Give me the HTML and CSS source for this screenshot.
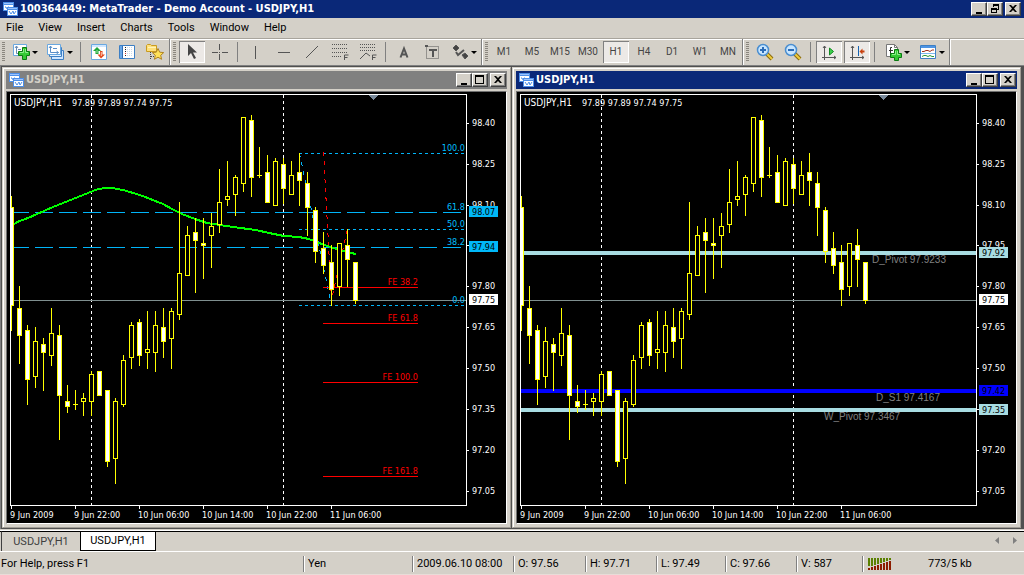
FILE: index.html
```html
<!DOCTYPE html>
<html lang="en">
<head>
<meta charset="utf-8">
<title>MetaTrader</title>
<link rel="stylesheet" href="styles.css">
</head>
<body>
<svg class="defs" width="0" height="0" aria-hidden="true">
  <symbol id="logo" viewBox="0 0 15 14">
    <path d="M0 0h11v9H0z" fill="#4d8fe8"/><path d="M1 3h9v5H1z" fill="#fff"/><path d="M1 1h9v1H1z" fill="#9cc4ff"/>
    <path d="M2 5h1v1h1v1h1V5h1v2h2" fill="none" stroke="#4d8fe8"/>
    <path d="M4 5h11v9H4z" fill="#4d8fe8"/><path d="M5 8h9v5H5z" fill="#fff"/><path d="M5 6h9v1H5z" fill="#9cc4ff"/>
    <path d="M6 9l2 3l2 -3l1 3l2 -3" fill="none" stroke="#4d8fe8"/>
  </symbol>
  <symbol id="min" viewBox="0 0 10 10"><path d="M2 8h6v2H2z"/></symbol>
  <symbol id="max" viewBox="0 0 10 10"><path d="M0 0h9v9H0zM1 2v6h7V2z" fill-rule="evenodd"/></symbol>
  <symbol id="restore" viewBox="0 0 10 10"><path d="M3 0h6v6H7V5h1V2H4v1H3zM1 4h6v5H1zM2 6v2h4V6z" fill-rule="evenodd"/></symbol>
  <symbol id="close" viewBox="0 0 10 10"><path d="M1 1h2l2 2l2 -2h2l-3 3.500l3 3.500h-2l-2 -2l-2 2H1l3 -3.500z"/></symbol>
  <symbol id="caret" viewBox="0 0 6 3"><path d="M0 0h6L3 3z"/></symbol>
</svg>

<header class="titlebar app-title">
  <svg class="logo"><use href="#logo"/></svg>
  <h1 class="title-text">100364449: MetaTrader - Demo Account - USDJPY,H1</h1>
  <button class="winbtn" aria-label="Minimize"><svg><use href="#min"/></svg></button>
  <button class="winbtn" aria-label="Restore"><svg><use href="#restore"/></svg></button>
  <button class="winbtn winclose" aria-label="Close"><svg><use href="#close"/></svg></button>
</header>

<nav class="menu">
  <button>File</button><button>View</button><button>Insert</button><button>Charts</button><button>Tools</button><button>Window</button><button>Help</button>
</nav>

<div class="toolbar" role="toolbar">
  <div class="band">
    <i class="grip"></i>
    <button class="tool drop" aria-label="New chart"><svg class="icon" viewBox="0 0 18 18">
      <path d="M1.500 1.500h13v11h-13z" fill="#fff" stroke="#6aa8e0"/><path d="M4.500 3v7.500h8M3 5l1.500-2L6 5M6 6.500h3" fill="none" stroke="#6a8cb4"/>
      <path d="M10.500 4.500h4v4h3v4h-3v4h-4v-4h-4v-4h4z" fill="#35c935" stroke="#0b7a12"/><path d="M13.500 6v3.500H16M11.500 6v3.500H8" fill="none" stroke="#8cf08c"/></svg><svg class="caret"><use href="#caret"/></svg></button>
    <button class="tool drop" aria-label="Profiles"><svg class="icon" viewBox="0 0 18 18">
      <path d="M4.500 7.500h12v9h-12z" fill="#cfe6ff" stroke="#3d7fc4"/><path d="M2.500 4.500h12v9h-12z" fill="#e4f1ff" stroke="#3d7fc4"/><path d="M.500 1.500h13v10H.500z" fill="#fff" stroke="#6aa8e0"/>
      <path d="M3.500 3v6.500h8M2 5l1.500-2L5 5M9.500 8l2 1.500l-2 1.500M6 5.500h4" fill="none" stroke="#5a8fc8"/></svg><svg class="caret"><use href="#caret"/></svg></button>
    <i class="sep"></i>
    <button class="tool" aria-label="Market Watch"><svg class="icon" viewBox="0 0 18 18">
      <path d="M1.500 1.500h15v15h-15z" fill="#fff" stroke="#6aa8e0"/><path d="M2 2h14v2H2z" fill="#cfe6ff"/>
      <path d="M7 4l4 4H8.500v3h-3V8H3z" fill="#1fa53a"/><path d="M6.500 7h1v3h-1z" fill="#9be8a8"/>
      <path d="M11 15.500l-3.500-4H10V8h2.500v3.500H15z" fill="#e0481c"/><path d="M10.800 9h1v4h-1z" fill="#ffc8b0"/></svg></button>
    <button class="tool" aria-label="Data Window"><svg class="icon" viewBox="0 0 18 18">
      <path d="M1.500 2.500h15v13h-15z" fill="#fff" stroke="#3d7fc4"/><path d="M2 3h3v12H2z" fill="#6aa8e8"/><path d="M4 3h1v12H4z" fill="#2f6cb4"/>
      <path d="M7 4h1v1H7zM7 6h1v1H7zM7 8h1v1H7zM7 12h1v1H7z" fill="#222"/><path d="M7 10h1v1H7z" fill="#d33"/><path d="M9 4.500h6M9 6.500h6M9 8.500h6M9 10.500h6M9 12.500h6" stroke="#c8d8ea" stroke-dasharray="1 1"/></svg></button>
    <button class="tool" aria-label="Navigator"><svg class="icon" viewBox="0 0 18 18">
      <path d="M.500 2.500l1-1h3l1 1h5v6H.500z" fill="#ffe07a" stroke="#c99b20"/><path d="M2 4.500h8" stroke="#fff3b8"/><path d="M4.500 9v7M5 13.500h3" stroke="#444" stroke-dasharray="1 1"/>
      <path d="M12 5.500l1.700 3.700l4 .4l-3 2.700l.9 4l-3.600-2.100l-3.600 2.100l.9-4l-3-2.700l4-.4z" fill="#ffe158" stroke="#b08420"/></svg></button>
  </div>
  <div class="band">
    <i class="grip"></i>
    <button class="tool pressed" aria-label="Cursor" aria-pressed="true"><svg class="icon gray" viewBox="0 0 18 18"><path d="M5 1v12l3-3l3 6l2-1l-3-5.500h4z" fill="#444" stroke="none"/></svg></button>
    <button class="tool" aria-label="Crosshair"><svg class="icon gray" viewBox="0 0 18 18"><path d="M8.500 1v6M8.500 11v6M1 9.500h6M11 9.500h6M8 9.500h1"/></svg></button>
    <i class="sep"></i>
    <button class="tool" aria-label="Vertical line"><svg class="icon gray" viewBox="0 0 18 18"><path d="M8.500 3v13"/></svg></button>
    <button class="tool" aria-label="Horizontal line"><svg class="icon gray" viewBox="0 0 18 18"><path d="M3 9.500h12"/></svg></button>
    <button class="tool" aria-label="Trendline"><svg class="icon gray" viewBox="0 0 18 18"><path d="M3 15L15 3"/></svg></button>
    <button class="tool" aria-label="Fibonacci retracement"><svg class="icon gray" viewBox="0 0 18 18"><path d="M1 1.500h15M1 5.500h15M1 9.500h15M1 13.500h10" stroke-dasharray="1 1"/><path d="M13.500 17v-5h4M13.500 14.500h3"/></svg></button>
    <button class="tool" aria-label="Fibonacci expansion"><svg class="icon gray" viewBox="0 0 18 18"><path d="M1 1.500h16M1 4.500h16M1 7.500h16" stroke-dasharray="1 1"/><path d="M1 16l6-6l4 3M13.500 17v-5h4M13.500 14.500h3"/></svg></button>
    <i class="sep"></i>
    <button class="tool" aria-label="Text"><svg class="icon gray" viewBox="0 0 18 18"><path d="M5.500 14.500L9 5.500l3.500 9M7 11.500h4" stroke-width="2"/></svg></button>
    <button class="tool" aria-label="Text label"><svg class="icon gray" viewBox="0 0 18 18"><path d="M3.500 3.500h12v12h-12z" stroke-dasharray="1 1"/><path d="M2 2h3v2H2z" fill="#555" stroke="none"/><path d="M6 6h8v2h-3v6H9V8H6z" fill="#555" stroke="none"/></svg></button>
    <button class="tool drop" aria-label="Arrows"><svg class="icon gray" viewBox="0 0 18 18"><path d="M5 2l3 3l-3 3l-3-3z M11 12l3-2l3 3l-3 3z" fill="#444"/><path d="M5 9l2 3l6-5" stroke-width="2"/></svg><svg class="caret"><use href="#caret"/></svg></button>
  </div>
  <div class="band">
    <i class="grip"></i>
    <button class="tool">M1</button><button class="tool">M5</button><button class="tool">M15</button><button class="tool">M30</button><button class="tool pressed" aria-pressed="true">H1</button><button class="tool">H4</button><button class="tool">D1</button><button class="tool">W1</button><button class="tool">MN</button>
  </div>
  <div class="band">
    <i class="grip"></i>
    <button class="tool" aria-label="Zoom in"><svg class="icon" viewBox="0 0 18 18"><path d="M10 10l6 6" stroke="#8a6a10" stroke-width="4"/><path d="M10 10l6 6" stroke="#f0cc3c" stroke-width="2"/><circle cx="7" cy="7" r="5.500" fill="#c9e6ff" stroke="#4a8ed0" stroke-width="1.500"/><path d="M4 7h6M7 4v6" stroke="#2b6cb8" stroke-width="2"/></svg></button>
    <button class="tool" aria-label="Zoom out"><svg class="icon" viewBox="0 0 18 18"><path d="M10 10l6 6" stroke="#8a6a10" stroke-width="4"/><path d="M10 10l6 6" stroke="#f0cc3c" stroke-width="2"/><circle cx="7" cy="7" r="5.500" fill="#c9e6ff" stroke="#4a8ed0" stroke-width="1.500"/><path d="M4 7h6" stroke="#2b6cb8" stroke-width="2"/></svg></button>
    <i class="sep"></i>
    <button class="tool pressed" aria-label="Auto scroll" aria-pressed="true"><svg class="icon gray" viewBox="0 0 18 18"><path d="M4.500 3v14M2 14.500h14M3 5l1.500-2L6 5M14 13l2 1.500l-2 1.500"/><path d="M9.500 5v7l4-3.500z" fill="#3fd04c" stroke="#118a22"/></svg></button>
    <button class="tool pressed" aria-label="Chart shift" aria-pressed="true"><svg class="icon gray" viewBox="0 0 18 18"><path d="M4.500 3v14M2 14.500h14M3 5l1.500-2L6 5M14 13l2 1.500l-2 1.500"/><path d="M10.500 3v10" stroke="#1464b4"/><path d="M11.500 8.500l3-3v2h2v2h-2v2z" fill="#c8400e" stroke="none"/></svg></button>
    <i class="sep"></i>
    <button class="tool drop" aria-label="Indicators"><svg class="icon" viewBox="0 0 18 18"><path d="M2.500 1.500h8l3 3v9h-11z" fill="#fff" stroke="#777"/><path d="M10.500 1.500v3h3" fill="none" stroke="#777"/><path d="M8 4.500H6.500v7M5 7.500h4" fill="none" stroke="#333"/>
      <path d="M10.500 6.500h4v4h3v4h-3v3h-4v-3h-4v-4h4z" fill="#35c935" stroke="#0b7a12"/><path d="M13.500 8v3.500H16M11.500 8v3.500H8" fill="none" stroke="#8cf08c"/></svg><svg class="caret"><use href="#caret"/></svg></button>
    <button class="tool drop" aria-label="Templates"><svg class="icon" viewBox="0 0 18 18"><path d="M1.500 2.500h15v13h-15z" fill="#fff" stroke="#3d7fc4"/><path d="M2 3h14v2H2z" fill="#4d94e4"/><path d="M2 10.500h14" stroke="#7db8ee"/><path d="M3 8.500h2l2-1h2l2 1l2-1.500h2" fill="none" stroke="#a3301c"/><path d="M3 13.500l2-1h2l2 1l2-1l2 1h2" fill="none" stroke="#2a9a3a"/></svg><svg class="caret"><use href="#caret"/></svg></button>
  </div>
</div>

<main class="mdi">
  <section class="window">
    <header class="titlebar inactive">
      <svg class="logo"><use href="#logo"/></svg>
      <h2 class="title-text">USDJPY,H1</h2>
      <button class="winbtn" aria-label="Minimize"><svg><use href="#min"/></svg></button>
      <button class="winbtn" aria-label="Maximize"><svg><use href="#max"/></svg></button>
      <button class="winbtn winclose" aria-label="Close"><svg><use href="#close"/></svg></button>
    </header>
    <div class="client">
      <svg class="chart" viewBox="7 92 499 431" preserveAspectRatio="xMinYMin meet">
        <g class="base"></g>
        <path class="deepsky long" d="M11 212.500H466M11 247.500H466"/>
        <path class="deepsky short" d="M299 153.500H466M299 229.500H466M299 305.500H466"/>
        <path class="deepsky diagonal" d="M299.500 153.500L331.500 305.500"/>
        <path class="red diagonal" d="M323.500 152L331.500 300L347.500 229"/>
        <path class="red" d="M323 287.500H418M323 323.500H418M323 382.500H418M323 476.500H418"/>
        <polyline class="average" points="13,225 17,222 28,218 53,207 83,195 98,189 106,188 112,188 123,190 140,195 163,204 172,209 182,214 195,219 207,223 233,227 256,230 269,233 284,236 299,237 309,239 319,243 333,248 343,251 351,253 356,254"/>
        <g class="candles"></g>
        <g class="fib"><text x="465" y="151">100.0</text><text x="465" y="210">61.8</text><text x="465" y="227">50.0</text><text x="465" y="245">38.2</text><text x="465" y="303">0.0</text></g>
        <g class="expansion"><text x="418" y="285">FE 38.2</text><text x="418" y="321">FE 61.8</text><text x="418" y="380">FE 100.0</text><text x="418" y="474">FE 161.8</text></g>
        <g class="tag sky"><rect x="469" y="206" width="29" height="11"/><text x="472" y="215">98.07</text></g>
        <g class="tag sky"><rect x="469" y="241" width="29" height="11"/><text x="472" y="250">97.94</text></g>
        <g class="tag white"><rect x="469" y="294" width="29" height="11"/><text x="472" y="303">97.75</text></g>
      </svg>
    </div>
  </section>
  <section class="window">
    <header class="titlebar">
      <svg class="logo"><use href="#logo"/></svg>
      <h2 class="title-text">USDJPY,H1</h2>
      <button class="winbtn" aria-label="Minimize"><svg><use href="#min"/></svg></button>
      <button class="winbtn" aria-label="Maximize"><svg><use href="#max"/></svg></button>
      <button class="winbtn winclose" aria-label="Close"><svg><use href="#close"/></svg></button>
    </header>
    <div class="client">
      <svg class="chart" viewBox="7 92 499 431" preserveAspectRatio="xMinYMin meet">
        <g class="base"></g>
        <path class="pivot" d="M11 253H466M11 410H466"/>
        <path class="support" d="M11 391H466"/>
        <g class="candles"></g>
        <g class="levels"><text x="362" y="263">D_Pivot 97.9233</text><text x="366" y="401">D_S1 97.4167</text><text x="314" y="420">W_Pivot 97.3467</text></g>
        <g class="tag powder"><rect x="469" y="247" width="29" height="11"/><text x="472" y="256">97.92</text></g>
        <g class="tag white"><rect x="469" y="294" width="29" height="11"/><text x="472" y="303">97.75</text></g>
        <g class="tag blue"><rect x="469" y="385" width="29" height="11"/><text x="472" y="394">97.42</text></g>
        <g class="tag powder"><rect x="469" y="404" width="29" height="11"/><text x="472" y="413">97.35</text></g>
      </svg>
    </div>
  </section>
</main>

<div class="tabs" role="tablist">
  <button class="tab" role="tab">USDJPY,H1</button><button class="tab active" role="tab" aria-selected="true">USDJPY,H1</button>
  <span class="scroll"><button aria-label="Previous tab"><svg viewBox="0 0 4 7"><path d="M4 0v7L0 3.500z"/></svg></button><button aria-label="Next tab"><svg viewBox="0 0 4 7"><path d="M0 0v7l4-3.500z"/></svg></button></span>
</div>

<footer class="status">
  <span>For Help, press F1</span><span>Yen</span><span>2009.06.10 08:00</span><span>O: 97.56</span><span>H: 97.71</span><span>L: 97.49</span><span>C: 97.66</span><span>V: 587</span>
  <span class="traffic"><svg viewBox="0 0 24 12"><path class="in" d="M0 0h2v8H0zM3 0h2v8H3zM6 0h2v7H6zM9 0h2v6H9zM12 0h2v5H12zM15 0h2v4H15zM18 0h2v3H18zM21 0h2v2H21z"/><path class="out" d="M0 10h2v2H0zM3 9h2v3H3zM6 8h2v4H6zM9 7h2v5H9zM12 6h2v6H12zM15 5h2v7H15zM18 4h2v8H18zM21 3h2v9H21z"/></svg><b>773/5 kb</b></span>
</footer>
<script src="chart.js"></script>
</body>
</html>
```
FILE: styles.css
```css
* { box-sizing: border-box; }
html { height: 100%; }
body {
  margin: 0; min-height: 100vh; display: flex; flex-direction: column;
  background: #d4d0c8; color: #000;
  font: 11px/14px "Roboto", "Liberation Sans", sans-serif;
}
.defs { position: absolute; }
button { font: inherit; color: inherit; background: none; border: 0; padding: 0; margin: 0; }
svg { display: block; }

.titlebar { display: flex; align-items: center; height: 18px; padding: 0 1px 0 3px; background: #0a2878; color: #fff; }
.app-title { padding-right: 3px; }
.inactive { background: #808080; color: #d4d0c8; }
.logo { width: 15px; height: 14px; margin-right: 2px; flex: none; }
.title-text { flex: 1; margin: 0; font: bold 11px/18px "DejaVu Sans Condensed", "DejaVu Sans", sans-serif; white-space: nowrap; overflow: hidden; }
.winbtn {
  width: 16px; height: 14px; padding: 1px 2px; flex: none; background: #d4d0c8;
  border: 1px solid; border-color: #fff #404040 #404040 #fff; box-shadow: inset -1px -1px #808080;
}
.winbtn svg { width: 10px; height: 10px; }
.winclose { margin-left: 2px; }

.menu { display: flex; gap: 15px; height: 20px; padding-left: 6px; align-items: center; }

.toolbar { display: flex; height: 28px; border-top: 1px solid #a8a49c; border-bottom: 1px solid #808080; box-shadow: inset 0 1px #fff; }
.band { display: flex; align-items: center; padding-left: 2px; border-right: 1px solid #fff; box-shadow: inset -1px 0 #808080; padding-right: 1px; }
.grip { width: 3px; height: 20px; margin-right: 2px; background: repeating-linear-gradient(#8a867e 0 1px, transparent 1px 2px); }
.sep { width: 8px; height: 20px; background: linear-gradient(90deg, transparent 3px, #808080 3px 4px, transparent 4px); }
.tool { width: 28px; height: 24px; display: flex; align-items: center; justify-content: center; color: #444; border: 1px solid transparent; background-clip: padding-box; font-size: 10px; }
.drop { width: 35px; gap: 2px; }
.pressed { background-color: #ece9e6; box-shadow: inset 1px 1px #808080, inset -1px -1px #fff; }
.icon { width: 18px; height: 18px; flex: none; }
.gray { fill: none; stroke: #555; }
.caret { width: 6px; height: 3px; flex: none; fill: #000; }

.mdi { flex: 1; display: flex; gap: 1px; padding: 1px 3px 1px 1px; border-left: 1px solid #808080; background: #505050; }
.window { flex: 1 1 0; min-width: 0; display: flex; flex-direction: column; gap: 2px; padding: 3px; border: 1px solid; border-color: #d4d0c8 #a09c94 #a09c94 #d4d0c8; background: #d4d0c8; box-shadow: inset 1px 1px #fff; }
.client { flex: 1; display: flex; background: #000; border: 1px solid; border-color: #707070 #fff #fff #707070; }
.chart { flex: 1; min-width: 0; font: 9px "DejaVu Sans Condensed", "DejaVu Sans", sans-serif; shape-rendering: crispEdges; }
.chart path { fill: none; }
.frame { stroke: #fff; }
.period { stroke: #fff; stroke-dasharray: 3 3; }
.price { stroke: #7f8f8f; }
.marker { fill: #778899; }
.axis { fill: #fff; }
.symbol { font-size: 10px; }
.wick { fill: #ff0; }
.up { fill: #000; }
.down { fill: #fff; }
.deepsky { stroke: #00b4f8; }
.long { stroke-dasharray: 18 6; }
.short { stroke-dasharray: 3 3; }
.red { stroke: #f00; }
.diagonal { stroke-dasharray: 4 5; }
.average { fill: none; stroke: #0f0; stroke-width: 2; }
.fib { fill: #00bfff; text-anchor: end; }
.expansion { fill: #f00; text-anchor: end; }
.pivot { stroke: #a8dce2; stroke-width: 4; }
.support { stroke: #00f; stroke-width: 4; }
.levels { fill: #808080; font: 10px "Liberation Sans", Arial, sans-serif; }
.tag text { fill: #000; }
.sky rect { fill: #00b8f8; }
.white rect { fill: #fff; }
.powder rect { fill: #a8dce2; }
.blue rect { fill: #00f; }

.tabs { display: flex; height: 22px; padding-left: 1px; border-top: 1px solid #d4d0c8; box-shadow: inset 0 1px #fff, inset 0 2px #000; }
.tab { height: 20px; margin-top: 1px; color: #404040; width: 79px; border-top: 1px solid #000; border-left: 1px solid #404040; }
.tab.active { width: 76px; background: #fff; color: #000; border: 1px solid #000; }
.scroll { margin-left: auto; display: flex; align-items: center; gap: 14px; padding-right: 7px; }
.scroll svg { width: 4px; height: 7px; fill: #808080; }

.status {
  display: grid; height: 24px; align-items: center; border-top: 1px solid #fff; box-shadow: inset 0 -1px #e8dcd8; white-space: nowrap;
  grid-template-columns: 303fr 109fr 101fr 72fr 71fr 69fr 71fr 66fr 162fr;
}
.status > span { height: 16px; line-height: 16px; min-width: 0; padding-left: 4px; border-left: 1px solid #808080; box-shadow: inset 1px 0 #fff; }
.status > span:first-child { border: 0; padding-left: 1px; box-shadow: none; }
.status > .traffic { display: flex; align-items: center; gap: 36px; padding-left: 5px; }
.traffic b { font-weight: normal; }
.traffic svg { width: 24px; height: 12px; }
.in { fill: #5a8000; }
.out { fill: #8c1c00; }
```
FILE: chart.js
```js
// One row per hour: high, body top, body bottom, low, direction (d = down, u = up, x = doji)
const bars = [
  [196,207,306,331,'d'],[286,308,336,364,'d'],[325,330,380,405,'d'],[327,341,377,388,'u'],
  [338,344,353,391,'d'],[308,333,356,366,'u'],[325,335,396,440,'d'],[385,401,407,413,'d'],
  [390,404,405,410,'x'],[393,398,402,416,'u'],[371,374,402,416,'u'],[371,371,396,396,'d'],
  [390,390,462,467,'d'],[398,401,459,484,'u'],[355,360,405,407,'u'],[322,325,358,369,'u'],
  [319,322,356,366,'d'],[311,349,353,369,'u'],[311,325,353,372,'u'],[308,327,342,358,'d'],
  [308,311,339,369,'u'],[202,273,315,320,'u'],[226,235,276,276,'u'],[218,232,241,293,'d'],
  [218,243,246,279,'d'],[213,226,236,268,'u'],[169,202,225,233,'u'],[161,196,200,206,'u'],
  [175,177,195,216,'u'],[117,117,184,192,'u'],[115,120,178,197,'d'],[147,175,176,178,'x'],
  [155,172,203,203,'d'],[158,161,206,206,'u'],[158,164,189,204,'d'],[161,175,195,195,'u'],
  [153,172,181,206,'d'],[172,183,208,236,'d'],[207,210,252,263,'d'],[232,248,266,274,'d'],
  [245,262,290,306,'d'],[243,243,287,296,'u'],[229,245,260,287,'d'],[262,262,301,304,'d']
];
const rect = (cls, x, y, w, h) => `<rect class="${cls}" x="${x}" y="${y}" width="${w}" height="${h}"/>`;

const candles = bars.map(([high, top, bottom, low, dir], i) => {
  const x = 11 + i * 8;
  const left = i ? x - 2 : x;
  const width = i ? 5 : 3;
  let out = rect('wick', x, high, 1, low - high) + rect('wick', left, top, width, bottom - top);
  if (dir !== 'x') {
    out += rect(dir === 'u' ? 'up' : 'down', i ? x - 1 : x, top + 1, i ? 3 : 2, bottom - top - 2);
  }
  return out;
}).join('');

const prices = [[98.40,123],[98.25,164],[98.10,205],[97.95,245],[97.80,286],[97.65,327],[97.50,368],[97.35,409],[97.20,450],[97.05,491]];
const times = ['9 Jun 2009','9 Jun 22:00','10 Jun 06:00','10 Jun 14:00','10 Jun 22:00','11 Jun 06:00'];

const base =
  '<path class="period" d="M91.500 95V505M283.500 95V505"/>' +
  '<path class="price" d="M11 300.500H466"/>' +
  '<path class="frame" d="M10.500 505.500V94.500H466.500V505.500Z"/>' +
  '<polygon class="marker" points="368,95 378,95 373,100"/>' +
  '<text class="axis symbol" x="14" y="106">USDJPY,H1</text>' +
  '<text class="axis" x="72" y="106">97.89 97.89 97.74 97.75</text>' +
  prices.map(([p, y]) => rect('axis', 467, y, 2, 1) + `<text class="axis" x="472" y="${y + 3}">${p.toFixed(2)}</text>`).join('') +
  times.map((t, i) => rect('axis', 11 + i * 64, 506, 1, 3) + `<text class="axis" x="${10 + i * 64}" y="518">${t}</text>`).join('');

document.querySelectorAll('.base').forEach(g => { g.innerHTML = base; });
document.querySelectorAll('.candles').forEach(g => { g.innerHTML = candles; });
```
